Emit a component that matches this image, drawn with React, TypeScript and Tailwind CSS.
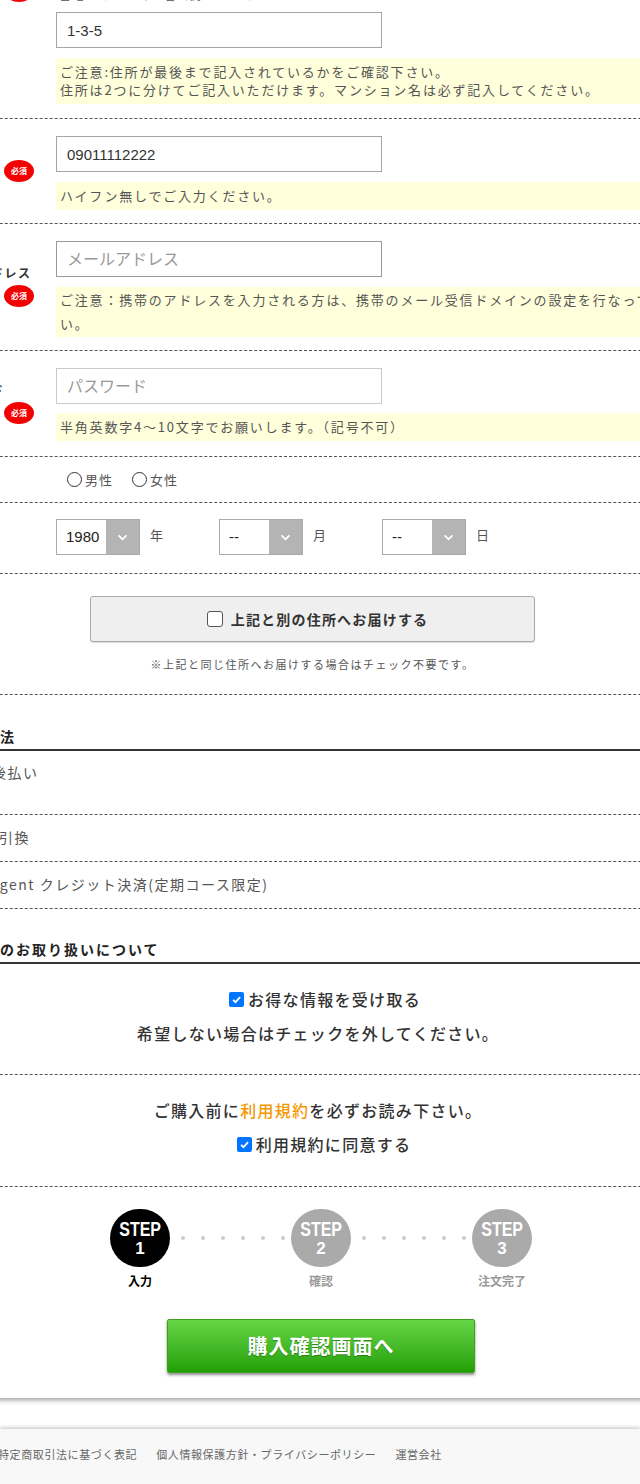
import React from "react";

function Req() {
  return (
    <span className="flex h-[22px] w-[30px] items-center justify-center rounded-[50%] bg-[#f30000] text-[8px] font-bold leading-none text-white">
      必須
    </span>
  );
}

function Note({ children, className = "" }: { children: React.ReactNode; className?: string }) {
  return (
    <div
      className={`whitespace-nowrap bg-[#ffffdb] px-[4px] text-[13px] tracking-[1.8px] text-[#555] ${className}`}
    >
      {children}
    </div>
  );
}

function TextInput({
  value,
  placeholder,
  border = "border-[#a5a5a5]",
}: {
  value?: string;
  placeholder?: string;
  border?: string;
}) {
  return (
    <input
      readOnly
      defaultValue={value}
      placeholder={placeholder}
      className={`block h-[36px] w-[326px] border ${border} bg-white px-[10px] font-['Liberation_Sans','Noto_Sans_CJK_JP',sans-serif] text-[15px] text-[#333] outline-none placeholder:text-[16px] placeholder:text-[#999]`}
    />
  );
}

function Chevron() {
  return (
    <svg viewBox="0 0 12 8" className="h-[7px] w-[11px]">
      <path d="M1.5 1.5 L6 6 L10.5 1.5" fill="none" stroke="white" strokeWidth="2" />
    </svg>
  );
}

function Sel({ v, unit }: { v: string; unit: string }) {
  return (
    <div className="flex w-[163px] items-center">
      <div className="flex h-[36px] w-[84px] border border-[#aaa] bg-white">
        <span className="flex flex-1 items-center pl-[9px] font-['Liberation_Sans',sans-serif] text-[15px] text-[#222]">
          {v}
        </span>
        <span className="flex w-[33px] items-center justify-center bg-[#b4b4b4]">
          <Chevron />
        </span>
      </div>
      <span className="-mt-[4px] ml-[10px] text-[13px] text-[#555]">{unit}</span>
    </div>
  );
}

function Radio({ label }: { label: string }) {
  return (
    <span className="flex items-center">
      <span className="h-[15px] w-[15px] rounded-full border border-[#333] bg-white" />
      <span className="ml-[3px] text-[13px] tracking-[1px] text-[#555]">{label}</span>
    </span>
  );
}

function Checked() {
  return (
    <span className="mr-[4px] flex h-[15px] w-[15px] items-center justify-center rounded-[2px] bg-[#0075ff]">
      <svg viewBox="0 0 12 12" className="h-[11px] w-[11px]">
        <path d="M2.3 6.3 L4.9 8.9 L9.9 3.3" fill="none" stroke="white" strokeWidth="2" />
      </svg>
    </span>
  );
}

function Step({ n, label, active }: { n: string; label: string; active?: boolean }) {
  return (
    <div className="flex w-[60px] flex-col items-center">
      <div
        className={`flex h-[58px] w-[60px] flex-col items-center justify-center rounded-full font-['Liberation_Sans',sans-serif] font-bold text-white ${
          active ? "bg-black" : "bg-[#aaa]"
        }`}
      >
        <span className="scale-x-[0.8] text-[20px] leading-[20px]">STEP</span>
        <span className="text-[17px] leading-[19px]">{n}</span>
      </div>
      <span
        className={`mt-[6px] whitespace-nowrap text-[12px] font-bold leading-[16px] ${
          active ? "text-black" : "text-[#999]"
        }`}
      >
        {label}
      </span>
    </div>
  );
}

function Dots() {
  return (
    <div className="flex h-[58px] w-[121px] items-center gap-[16px] pl-[11px]">
      {[0, 1, 2, 3, 4, 5].map((i) => (
        <span key={i} className="h-[4px] w-[4px] rounded-full bg-[#ccc]" />
      ))}
    </div>
  );
}

const rowLine = "border-b border-dashed border-[#555]";
const labelText = "pl-[37px] text-[12px] font-bold leading-[14px] tracking-[1.5px] text-[#333] whitespace-nowrap";

export default function App() {
  return (
    <div className="relative h-[1484px] w-[640px] overflow-hidden bg-white font-['Noto_Sans_CJK_JP','Noto_Sans',sans-serif]">
      <div className="-ml-[100px] w-[836px] bg-white pb-[25px] shadow-[0_2px_5px_rgba(0,0,0,0.4)]">
        {/* address line 2 */}
        <div className={`flex pb-[14px] ${rowLine}`}>
          <div className="w-[156px] shrink-0">
            <div className="-mt-[20px] ml-[104px]">
              <Req />
            </div>
          </div>
          <div className="flex-1 pr-[16px]">
            <p className="-mt-[13px] h-[16px] pl-[3px] text-[12px] leading-[16px] tracking-[1px] text-[#555]">
              番地・マンション名（例：1-3-5）
            </p>
            <div className="mt-[9px]">
              <TextInput value="1-3-5" />
            </div>
            <Note className="mt-[10px] py-[5px] leading-[18px]">
              ご注意:住所が最後まで記入されているかをご確認下さい。
              <br />
              住所は2つに分けてご記入いただけます。マンション名は必ず記入してください。
            </Note>
          </div>
        </div>

        {/* phone */}
        <div className={`flex pt-[17px] pb-[13px] ${rowLine}`}>
          <div className="w-[156px] shrink-0 pt-[5px]">
            <p className={labelText}>電話番号</p>
            <div className="ml-[104px] mt-[5px]">
              <Req />
            </div>
          </div>
          <div className="flex-1 pr-[16px]">
            <TextInput value="09011112222" />
            <Note className="mt-[10px] py-[5px] leading-[18px]">ハイフン無しでご入力ください。</Note>
          </div>
        </div>

        {/* email */}
        <div className={`flex pt-[17px] pb-[13px] ${rowLine}`}>
          <div className="w-[156px] shrink-0 pt-[25px]">
            <p className={labelText}>メールアドレス</p>
            <div className="ml-[104px] mt-[5px]">
              <Req />
            </div>
          </div>
          <div className="flex-1 pr-[16px]">
            <TextInput placeholder="メールアドレス" border="border-[#999]" />
            <Note className="mt-[10px] py-[1px] leading-[24px]">
              ご注意：携帯のアドレスを入力される方は、携帯のメール受信ドメインの設定を行なって下さ
              <br />
              い。
            </Note>
          </div>
        </div>

        {/* password */}
        <div className={`flex pt-[17px] pb-[15px] ${rowLine}`}>
          <div className="w-[156px] shrink-0 pt-[15px]">
            <p className={labelText}>パスワード</p>
            <div className="ml-[104px] mt-[5px]">
              <Req />
            </div>
          </div>
          <div className="flex-1 pr-[16px]">
            <TextInput placeholder="パスワード" border="border-[#cacaca]" />
            <Note className="mt-[9px] py-[5px] leading-[18px]">
              半角英数字4〜10文字でお願いします。（記号不可）
            </Note>
          </div>
        </div>

        {/* gender */}
        <div className={`flex h-[46px] items-center ${rowLine}`}>
          <div className="w-[156px] shrink-0">
            <p className={labelText}>性別</p>
          </div>
          <div className="flex items-center gap-[19px] pl-[11px]">
            <Radio label="男性" />
            <Radio label="女性" />
          </div>
        </div>

        {/* birthday */}
        <div className={`flex pt-[16px] pb-[18px] ${rowLine}`}>
          <div className="flex w-[156px] shrink-0 items-center">
            <p className={labelText}>生年月日</p>
          </div>
          <div className="flex">
            <Sel v="1980" unit="年" />
            <Sel v="--" unit="月" />
            <Sel v="--" unit="日" />
          </div>
        </div>

        {/* other address */}
        <div className={`pt-[22px] pb-[22px] ${rowLine}`}>
          <div className="ml-[190px] w-[445px]">
            <div className="flex h-[46px] items-center justify-center rounded-[3px] border border-[#aaa] bg-[#efefef] pl-[10px] shadow-[0_1px_1px_rgba(0,0,0,0.15)]">
              <span className="mr-[8px] h-[16px] w-[16px] rounded-[3px] border border-[#555] bg-white" />
              <span className="text-[14px] font-bold tracking-[1.2px] text-[#333]">
                上記と別の住所へお届けする
              </span>
            </div>
            <p className="mt-[14px] text-center text-[11px] leading-[16px] tracking-[1.5px] text-[#555]">
              ※上記と同じ住所へお届けする場合はチェック不要です。
            </p>
          </div>
        </div>

        {/* payment */}
        <h2 className="mt-[31px] border-b-2 border-[#333] pb-[3px] pl-[36px] text-[14px] font-bold leading-[20px] tracking-[2px] text-[#222]">
          お支払方法
        </h2>
        <div className={`pt-[11px] pb-[32px] pl-[92px] text-[14px] leading-[20px] tracking-[1.5px] text-[#555] ${rowLine}`}>
          後払い
        </div>
        <div className={`pt-[12px] pb-[14px] pl-[68px] text-[14px] leading-[20px] tracking-[1.5px] text-[#555] ${rowLine}`}>
          代金引換
        </div>
        <div className={`pt-[12px] pb-[14px] pl-[72px] text-[14px] leading-[20px] tracking-[1.5px] text-[#555] ${rowLine}`}>
          Paygent クレジット決済(定期コース限定)
        </div>

        {/* privacy */}
        <h2 className="mt-[30px] border-b-2 border-[#333] pb-[3px] pl-[36px] text-[14px] font-bold leading-[20px] tracking-[2px] text-[#222]">
          個人情報のお取り扱いについて
        </h2>
        <div className={`pt-[23px] pb-[29px] text-[16px] font-medium leading-[24px] tracking-[1.3px] text-[#333] ${rowLine}`}>
          <div className="flex items-center justify-center pl-[14px]">
            <Checked />
            お得な情報を受け取る
          </div>
          <p className="mt-[10px] text-center">希望しない場合はチェックを外してください。</p>
        </div>
        <div className={`pt-[23px] pb-[30px] text-[16px] font-medium leading-[24px] tracking-[1.3px] text-[#333] ${rowLine}`}>
          <p className="text-center">
            ご購入前に<span className="text-[#f39800]">利用規約</span>を必ずお読み下さい。
          </p>
          <div className="mt-[10px] flex items-center justify-center pl-[12px]">
            <Checked />
            利用規約に同意する
          </div>
        </div>

        {/* steps */}
        <div className="flex justify-center pt-[22px] pl-[6px]">
          <Step n="1" label="入力" active />
          <Dots />
          <Step n="2" label="確認" />
          <Dots />
          <Step n="3" label="注文完了" />
        </div>

        <div className="mt-[30px] flex justify-center pl-[6px]">
          <button className="h-[54px] w-[308px] rounded-[2px] border border-[#3f9f22] bg-linear-to-b from-[#66d645] to-[#20a000] text-[20px] font-bold tracking-[1px] text-white shadow-[0_2px_3px_rgba(0,0,0,0.45)] [text-shadow:0_1px_1px_rgba(0,0,0,0.3)]">
            購入確認画面へ
          </button>
        </div>
      </div>

      <footer className="mt-[31px] h-[56px] border-b border-[#ddd] bg-[#f8f8f8] shadow-[0_-1px_4px_rgba(0,0,0,0.25)]">
        <div className="-ml-[2px] flex gap-[19px] whitespace-nowrap pt-[17px] text-[11px] leading-[16px] tracking-[0.6px] text-[#666]">
          <span>特定商取引法に基づく表記</span>
          <span>個人情報保護方針・プライバシーポリシー</span>
          <span>運営会社</span>
        </div>
      </footer>
    </div>
  );
}
